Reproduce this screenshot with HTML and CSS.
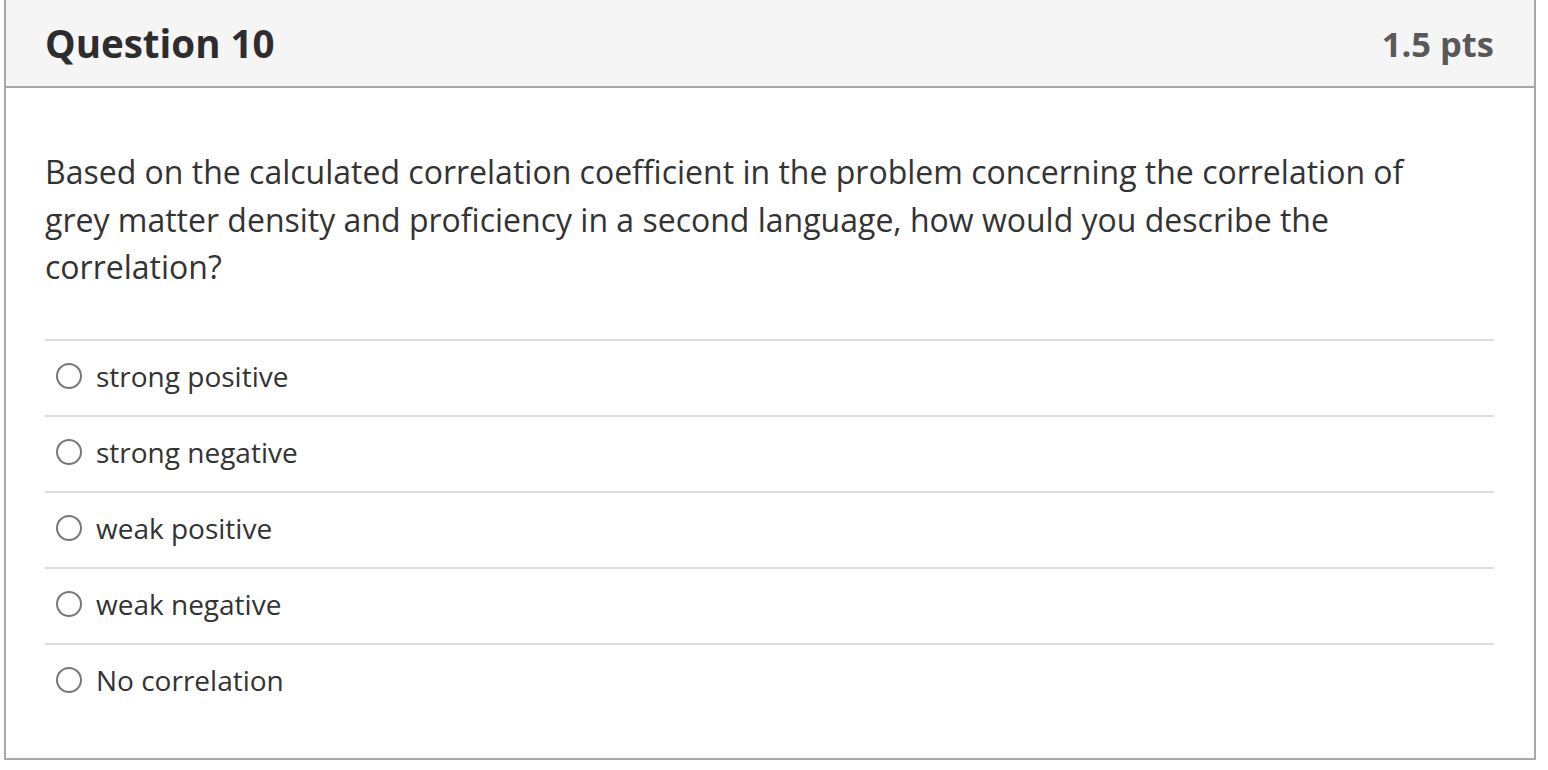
FILE: index.html
```html
<!DOCTYPE html>
<html>
<head>
<meta charset="utf-8">
<link rel="stylesheet" href="styles.css">
</head>
<body>
<div class="question">
  <div class="q-header">
    <h2 class="q-title">Question 10</h2>
    <span class="q-points">1.5 pts</span>
  </div>
  <div class="q-body">
    <p class="q-text">Based on the calculated correlation coefficient in the problem concerning the correlation of grey matter density and proficiency in a second language, how would you describe the correlation?</p>
    <ul class="answers">
      <li class="answer"><span class="radio"></span><span class="label">strong positive</span></li>
      <li class="answer"><span class="radio"></span><span class="label">strong negative</span></li>
      <li class="answer"><span class="radio"></span><span class="label">weak positive</span></li>
      <li class="answer"><span class="radio"></span><span class="label">weak negative</span></li>
      <li class="answer"><span class="radio"></span><span class="label">No correlation</span></li>
    </ul>
  </div>
</div>
</body>
</html>
```

FILE: styles.css
```css
html, body {
  margin: 0;
  padding: 0;
  background: #ffffff;
}
body {
  font-family: "Open Sans", "Liberation Sans", sans-serif;
  color: #2d2d2d;
}
.question {
  margin-left: 4px;
  width: 1532px;
  height: 760px;
  box-sizing: border-box;
  border: 2px solid #a8a8a8;
  border-top: 0;
  display: flex;
  flex-direction: column;
}
.q-header {
  height: 86px;
  background: #f5f5f5;
  border-bottom: 2px solid #a8a8a8;
  display: flex;
  align-items: center;
  justify-content: space-between;
  padding: 0 40px 0 39px;
}
.q-title {
  margin: 0;
  font-size: 38.5px;
  font-weight: 700;
  color: #2d2d30;
}
.q-points {
  font-size: 34.5px;
  font-weight: 700;
  color: #595959;
}
.q-body {
  padding: 60px 40px 0 39px;
}
.q-text {
  margin: 0 56px 48px 0;
  font-size: 32px;
  line-height: 47.5px;
  color: #333333;
}
.answers {
  list-style: none;
  margin: 0;
  padding: 0;
}
.answer {
  height: 76px;
  box-sizing: border-box;
  border-top: 2px solid #dddddd;
  display: flex;
  align-items: center;
  padding: 0 0 4px 11px;
}
.radio {
  width: 26px;
  height: 26px;
  box-sizing: border-box;
  border: 2px solid #777777;
  border-radius: 50%;
  margin-right: 14px;
  flex: none;
}
.label {
  font-size: 28px;
  color: #333333;
}
```
